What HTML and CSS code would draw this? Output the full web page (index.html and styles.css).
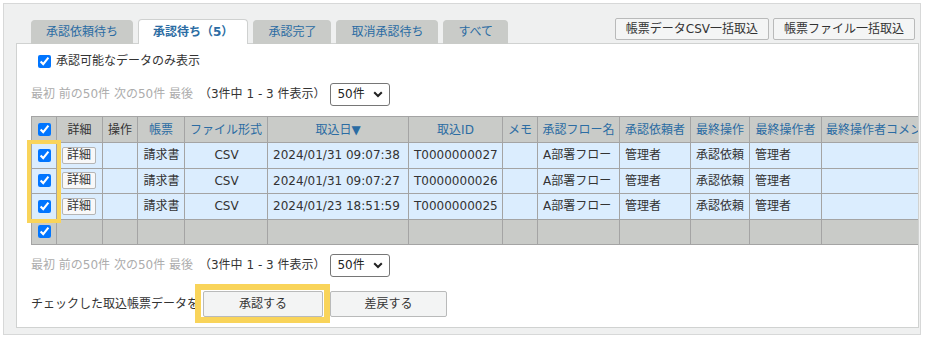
FILE: index.html
```html
<!DOCTYPE html>
<html lang="ja">
<head>
<meta charset="utf-8">
<title>承認待ち</title>
<link rel="stylesheet" href="styles.css">
</head>
<body>
<div class="frame">
  <div class="tabbar">
    <nav class="tabs">
      <a class="tab">承認依頼待ち</a>
      <a class="tab active">承認待ち（5）</a>
      <a class="tab">承認完了</a>
      <a class="tab">取消承認待ち</a>
      <a class="tab">すべて</a>
    </nav>
    <div class="tools">
      <button class="tool-btn">帳票データCSV一括取込</button>
      <button class="tool-btn">帳票ファイル一括取込</button>
    </div>
  </div>
  <div class="panel">
    <label class="only"><input type="checkbox" checked>承認可能なデータのみ表示</label>
    <div class="pager">
      <span class="nav">最初 前の50件 次の50件 最後</span>
      <span class="count">（3件中 1 - 3 件表示）</span>
      <span class="select-wrap">
        <select class="per"><option>50件</option></select>
        <svg class="chev" width="10" height="7" viewBox="0 0 10 7"><path d="M1.2 1.2 L5 5 L8.8 1.2" fill="none" stroke="#222" stroke-width="2"/></svg>
      </span>
    </div>
    <div class="table-wrap">
      <table class="grid">
        <colgroup>
          <col class="w-chk"><col class="w-det"><col class="w-op"><col class="w-doc"><col class="w-fmt"><col class="w-date"><col class="w-id"><col class="w-memo"><col class="w-flow"><col class="w-req"><col class="w-last"><col class="w-lastu"><col class="w-cmt">
        </colgroup>
        <thead>
          <tr>
            <th class="chk"><input type="checkbox" checked></th>
            <th class="plain">詳細</th>
            <th class="plain">操作</th>
            <th>帳票</th>
            <th>ファイル形式</th>
            <th>取込日▼</th>
            <th>取込ID</th>
            <th>メモ</th>
            <th>承認フロー名</th>
            <th>承認依頼者</th>
            <th>最終操作</th>
            <th>最終操作者</th>
            <th class="left">最終操作者コメント</th>
          </tr>
        </thead>
        <tbody>
          <tr>
            <td class="chk"><input type="checkbox" checked></td>
            <td><button class="detail">詳細</button></td>
            <td></td>
            <td class="c">請求書</td>
            <td class="c">CSV</td>
            <td>2024/01/31 09:07:38</td>
            <td>T0000000027</td>
            <td></td>
            <td>A部署フロー</td>
            <td>管理者</td>
            <td>承認依頼</td>
            <td>管理者</td>
            <td></td>
          </tr>
          <tr>
            <td class="chk"><input type="checkbox" checked></td>
            <td><button class="detail">詳細</button></td>
            <td></td>
            <td class="c">請求書</td>
            <td class="c">CSV</td>
            <td>2024/01/31 09:07:27</td>
            <td>T0000000026</td>
            <td></td>
            <td>A部署フロー</td>
            <td>管理者</td>
            <td>承認依頼</td>
            <td>管理者</td>
            <td></td>
          </tr>
          <tr>
            <td class="chk"><input type="checkbox" checked></td>
            <td><button class="detail">詳細</button></td>
            <td></td>
            <td class="c">請求書</td>
            <td class="c">CSV</td>
            <td>2024/01/23 18:51:59</td>
            <td>T0000000025</td>
            <td></td>
            <td>A部署フロー</td>
            <td>管理者</td>
            <td>承認依頼</td>
            <td>管理者</td>
            <td></td>
          </tr>
        </tbody>
        <tfoot>
          <tr>
            <td class="chk"><input type="checkbox" checked></td>
            <td></td><td></td><td></td><td></td><td></td><td></td><td></td><td></td><td></td><td></td><td></td><td></td>
          </tr>
        </tfoot>
      </table>
      <div class="mark-checks"></div>
    </div>
    <div class="pager pager-bottom">
      <span class="nav">最初 前の50件 次の50件 最後</span>
      <span class="count">（3件中 1 - 3 件表示）</span>
      <span class="select-wrap">
        <select class="per"><option>50件</option></select>
        <svg class="chev" width="10" height="7" viewBox="0 0 10 7"><path d="M1.2 1.2 L5 5 L8.8 1.2" fill="none" stroke="#222" stroke-width="2"/></svg>
      </span>
    </div>
    <div class="actions">
      <span class="lead">チェックした取込帳票データを</span>
      <span class="mark"><button class="act approve">承認する</button></span>
      <button class="act reject">差戻する</button>
    </div>
  </div>
</div>
</body>
</html>
```

FILE: styles.css
```css
body {
  margin: 0;
  padding: 3px;
  background: #fff;
  color: #333;
  font-family: "DejaVu Sans", "Noto Sans CJK JP", sans-serif;
  font-size: 12px;
  line-height: 16px;
}

.frame {
  width: 918px;
  box-sizing: border-box;
  border: 1px solid #d7d8d8;
  background: #eff0f0;
  padding: 14px 1px 6px 12px;
}

.tabbar {
  display: flex;
  height: 26px;
  margin-bottom: -1px;
  position: relative;
  z-index: 1;
}

.tabs {
  display: flex;
  align-items: flex-end;
  gap: 5px;
  padding-left: 15px;
}

.tab {
  box-sizing: border-box;
  height: 24px;
  padding: 0 14px;
  border: 1px solid #c9cbc8;
  border-bottom: 0;
  border-radius: 4px 4px 0 0;
  background: #c9cbc8;
  color: #2b6ca3;
  line-height: 23px;
  white-space: nowrap;
}

.tab.active {
  height: 25px;
  background: #fff;
  border-color: #cfd1d0;
  font-weight: bold;
  line-height: 24px;
}

.tools {
  display: flex;
  gap: 4px;
  margin-left: auto;
  margin-right: 4px;
  align-self: flex-start;
}

.tool-btn {
  height: 22px;
  padding: 0 10px;
  border: 1px solid #b9baba;
  border-radius: 2px;
  background: #f4f5f5;
  color: #333;
  font: inherit;
  line-height: 18px;
}

.panel {
  background: #fff;
  border: 1px solid #d0d2d1;
  padding: 0 0 10px 14px;
  overflow: hidden;
}

.only {
  display: flex;
  align-items: center;
  height: 24px;
  margin-top: 5px;
}

.only input {
  width: 13px;
  height: 13px;
  margin: 0 5px 0 7px;
}

.pager {
  display: flex;
  align-items: center;
  height: 24px;
  margin-top: 9px;
}

.pager-bottom {
  margin-top: 8px;
}

.nav {
  color: #acacac;
}

.count {
  margin-left: 6px;
}

.select-wrap {
  position: relative;
  margin-left: 5px;
  display: flex;
}

.per {
  appearance: none;
  -webkit-appearance: none;
  width: 60px;
  height: 23px;
  box-sizing: border-box;
  border: 1px solid #767676;
  border-radius: 3px;
  background: #fff;
  color: #222;
  font: inherit;
  padding: 0 0 0 6px;
}

.chev {
  position: absolute;
  right: 7px;
  top: 8px;
  pointer-events: none;
}

.table-wrap {
  position: relative;
  margin-top: 10px;
}

.grid {
  border-collapse: separate;
  border-spacing: 0;
  table-layout: fixed;
  width: 921px;
  border-left: 1px solid #a4a4a4;
  border-top: 1px solid #a4a4a4;
}

.w-chk { width: 25px; }
.w-det { width: 46px; }
.w-op { width: 35px; }
.w-doc { width: 47px; }
.w-fmt { width: 83px; }
.w-date { width: 141px; }
.w-id { width: 94px; }
.w-memo { width: 35px; }
.w-flow { width: 82px; }
.w-req { width: 71px; }
.w-last { width: 59px; }
.w-lastu { width: 72px; }
.w-cmt { width: 130px; }

.grid th,
.grid td {
  box-sizing: border-box;
  border-right: 1px solid #a4a4a4;
  border-bottom: 1px solid #a4a4a4;
  padding: 0 4px 0 5px;
  white-space: nowrap;
  overflow: hidden;
  vertical-align: middle;
}

.grid th {
  height: 26px;
  background: #c9cbc8;
  color: #2b6ca3;
  font-weight: normal;
  text-align: center;
  padding: 0 2px;
}

.grid th.plain {
  color: #333;
}

.grid th.left {
  text-align: left;
  padding-left: 4px;
}

.grid tbody td {
  height: 25.5px;
  background: #dbedfe;
}

.grid tfoot td {
  height: 25.5px;
  background: #c9cbc8;
}

.grid .c {
  text-align: center;
}

.grid .chk {
  padding: 0;
  text-align: center;
}

.grid .chk input {
  display: block;
  width: 13px;
  height: 13px;
  margin: 0 auto;
}

.detail {
  height: 17px;
  padding: 0 4px;
  border: 1px solid #b5b5b5;
  border-radius: 2px;
  background: #f8f8f8;
  color: #333;
  font: inherit;
  line-height: 15px;
  display: block;
}

.mark-checks {
  position: absolute;
  left: -4px;
  top: 24px;
  width: 34px;
  height: 83px;
  box-sizing: border-box;
  border: 4px solid #f9d45a;
  pointer-events: none;
}

.actions {
  display: flex;
  align-items: center;
  height: 26px;
  margin-top: 14px;
}

.mark {
  position: relative;
  margin-left: 4px;
  display: flex;
}

.mark::after {
  content: "";
  position: absolute;
  left: -8px;
  right: -7px;
  top: -7px;
  bottom: -6px;
  border: 6px solid #f9d45a;
  pointer-events: none;
}

.act {
  height: 26px;
  box-sizing: border-box;
  border: 1px solid #b9baba;
  border-radius: 2px;
  background: #f3f4f4;
  color: #333;
  font: inherit;
}

.approve {
  width: 120px;
}

.reject {
  width: 117px;
  margin-left: 7px;
}
```
